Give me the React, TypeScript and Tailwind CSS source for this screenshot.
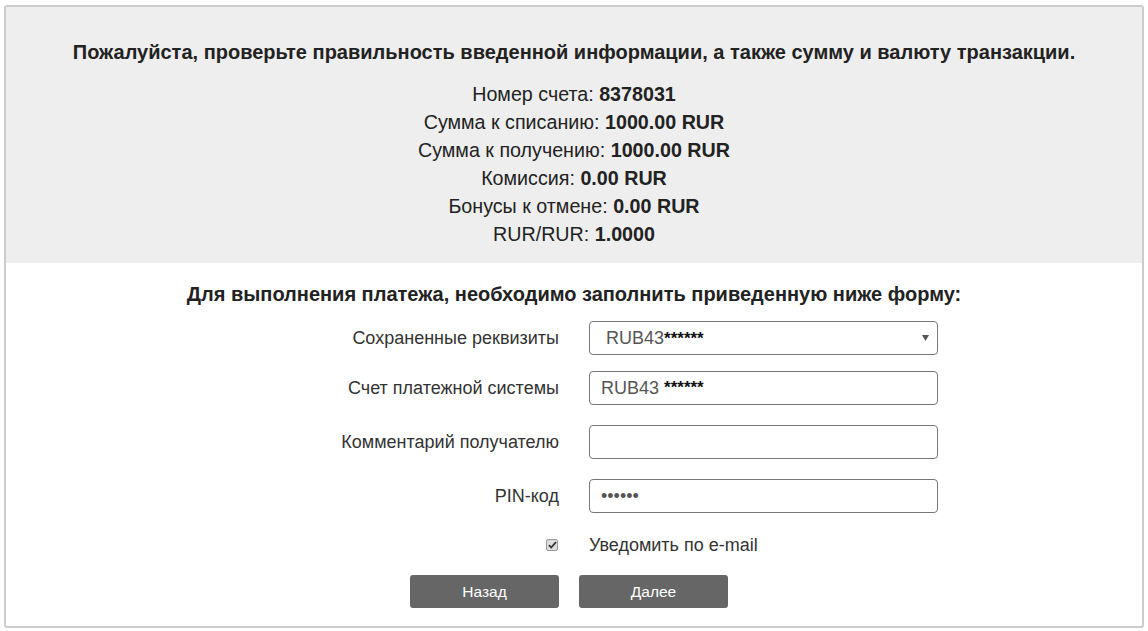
const info = [
  { label: "Номер счета:", value: "8378031" },
  { label: "Сумма к списанию:", value: "1000.00 RUR" },
  { label: "Сумма к получению:", value: "1000.00 RUR" },
  { label: "Комиссия:", value: "0.00 RUR" },
  { label: "Бонусы к отмене:", value: "0.00 RUR" },
  { label: "RUR/RUR:", value: "1.0000" },
];

function Row({ label, className, children }: { label: string; className?: string; children: React.ReactNode }) {
  return (
    <div className={"flex items-center " + (className ?? "")}>
      <div className="w-[553px] text-right text-[18px] text-[#333]">{label}</div>
      <div className="ml-[30px] w-[349px]">{children}</div>
    </div>
  );
}

const field =
  "h-[34px] w-full flex items-center border border-[#777] rounded-[4px] bg-white text-[18px] text-[#555]";

export default function App() {
  return (
    <div
      className="w-[1148px] h-[631px] bg-white pt-[5px] px-[4px]"
      style={{ fontFamily: '"Liberation Sans", Arial, sans-serif' }}
    >
      <div className="border-2 border-[#ccc] rounded-[3px] overflow-hidden">
        {/* SUMMARY */}
        <div className="bg-[#eee] pt-[33px] pb-[15px] text-center text-[#222]">
          <h1 className="text-[20px] leading-[24px] font-bold">
            Пожалуйста, проверьте правильность введенной информации, а также сумму и валюту транзакции.
          </h1>
          <div className="mt-[16px]">
            {info.map((item) => (
              <div key={item.label} className="text-[19.7px] leading-[28px]">
                {item.label} <b>{item.value}</b>
              </div>
            ))}
          </div>
        </div>

        {/* FORM */}
        <div className="pt-[19px] pb-[18px]">
          <h2 className="text-center text-[20px] leading-[24px] font-bold text-[#222]">
            Для выполнения платежа, необходимо заполнить приведенную ниже форму:
          </h2>

          <Row label="Сохраненные реквизиты" className="mt-[15px]">
            <div className={field + " pl-[16px] pr-[8px] justify-between"}>
              <span>
                RUB43<span className="text-[17px] font-bold text-[#111]">******</span>
              </span>
              <svg width="7" height="6" viewBox="0 0 7 6">
                <path d="M0 0h7L3.5 6z" fill="#555" />
              </svg>
            </div>
          </Row>

          <Row label="Счет платежной системы" className="mt-[16px]">
            <div className={field + " px-[11px]"}>
              RUB43&nbsp;<span className="text-[17px] font-bold text-[#111]">******</span>
            </div>
          </Row>

          <Row label="Комментарий получателю" className="mt-[20px]">
            <div className={field} />
          </Row>

          <Row label="PIN-код" className="mt-[20px]">
            <div className={field + " px-[11px] text-[12px]"}>••••••</div>
          </Row>

          <div className="flex items-center mt-[20px] h-[24px]">
            <div className="w-[553px] flex justify-end pr-[1px]">
              <span className="w-[12px] h-[12px] border border-[#999] rounded-[2px] bg-[#ddd] flex items-center justify-center">
                <svg width="9" height="8" viewBox="0 0 9 8">
                  <path d="M1 4.2l2.2 2.3L8 1.2" stroke="#333" strokeWidth="1.8" fill="none" />
                </svg>
              </span>
            </div>
            <div className="ml-[30px] text-[18px] text-[#333]">Уведомить по e-mail</div>
          </div>

          <div className="flex gap-[20px] mt-[18px] pl-[404px]">
            <button className="w-[149px] h-[33px] bg-[#666] text-white text-[15.5px] rounded-[3px]">Назад</button>
            <button className="w-[149px] h-[33px] bg-[#666] text-white text-[15.5px] rounded-[3px]">Далее</button>
          </div>
        </div>
      </div>
    </div>
  );
}
